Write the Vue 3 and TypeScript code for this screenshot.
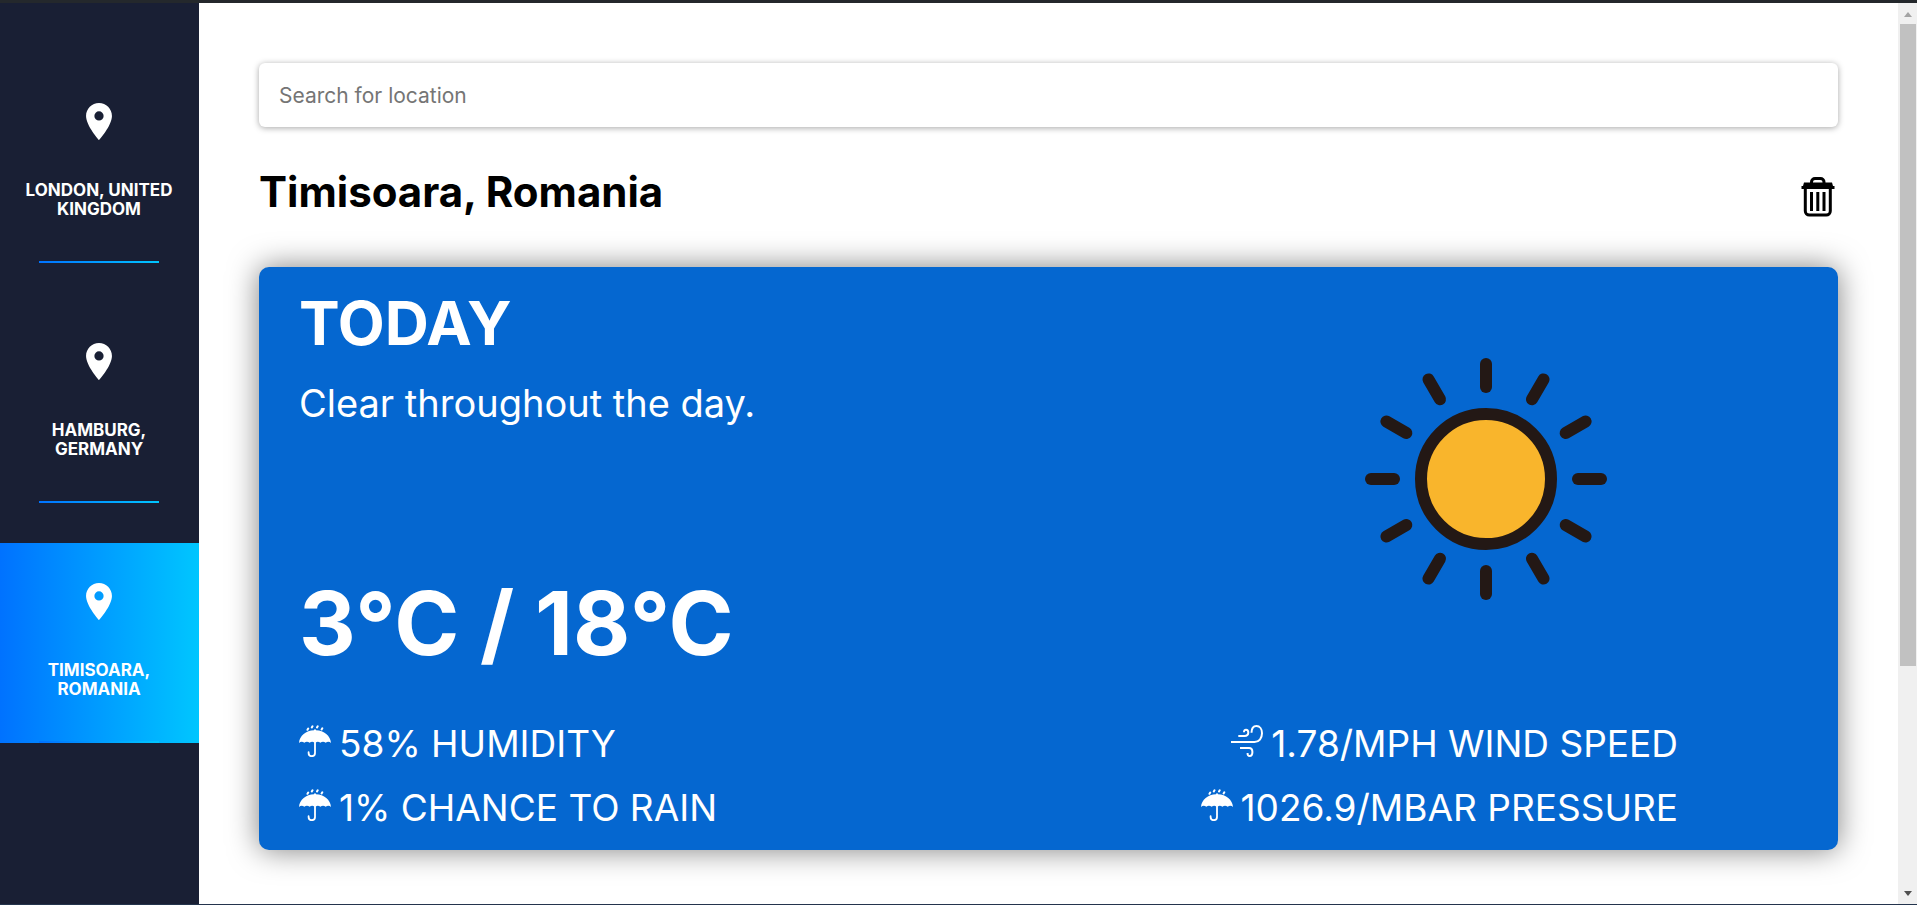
<script setup lang="ts">
import { ref } from 'vue'

interface Detail {
  icon: 'umbrella' | 'wind'
  text: string
}

const locations: string[] = ['London, United Kingdom', 'Hamburg, Germany', 'Timisoara, Romania']
const selected = ref(2)
const query = ref('')

const details: Detail[] = [
  { icon: 'umbrella', text: '58% HUMIDITY' },
  { icon: 'wind', text: '1.78/MPH WIND SPEED' },
  { icon: 'umbrella', text: '1% CHANCE TO RAIN' },
  { icon: 'umbrella', text: '1026.9/MBAR PRESSURE' },
]

const rayAngles: number[] = Array.from({ length: 12 }, (_, i) => i * 30)
</script>

<template>
  <div class="window">
    <div class="top-edge"></div>
    <div class="app">
      <nav class="sidebar" aria-label="Locations">
        <button
          v-for="(name, i) in locations"
          :key="name"
          type="button"
          class="location"
          :class="{ active: i === selected }"
          @click="selected = i"
        >
          <svg class="pin" viewBox="5 2 14 20" aria-hidden="true">
            <path
              fill="currentColor"
              fill-rule="evenodd"
              d="M12 2C8.13 2 5 5.13 5 9c0 5.25 7 13 7 13s7-7.75 7-13c0-3.87-3.13-7-7-7zm0 9.5a2.5 2.5 0 1 1 0-5 2.5 2.5 0 0 1 0 5z"
            />
          </svg>
          <span class="location-name">{{ name }}</span>
        </button>
      </nav>

      <main class="content">
        <input v-model="query" class="search" type="text" placeholder="Search for location" aria-label="Search for location" />

        <header class="heading">
          <h1 class="title">{{ locations[selected] }}</h1>
          <button type="button" class="remove" aria-label="Remove location">
            <svg viewBox="0 0 40 40" aria-hidden="true">
              <path d="M13.5 7V5a3.5 3.5 0 0 1 3.500-3.500h5.500a3.500 3.500 0 0 1 3.500 3.500v2" fill="none" stroke="#000" stroke-width="3" />
              <path d="M6 5.500h28l1 3.500h1.500v3h-33V9H5z" fill="#000" />
              <path d="M7.300 11v23a4 4 0 0 0 4 4h17a4 4 0 0 0 4-4V11" fill="none" stroke="#000" stroke-width="3" />
              <path d="M13.500 15v19M19.800 15v19M26 15v19" stroke="#000" stroke-width="3" />
            </svg>
          </button>
        </header>

        <section class="card">
          <div class="summary">
            <div class="forecast">
              <h2 class="day">TODAY</h2>
              <p class="description">Clear throughout the day.</p>
              <p class="temperature">3°C / 18°C</p>
            </div>
            <svg class="sun" viewBox="-192 -192 384 384" role="img" aria-label="Sunny">
              <circle r="65" fill="#f9b52c" stroke="#231815" stroke-width="12" />
              <line
                v-for="angle in rayAngles"
                :key="angle"
                y1="-115"
                y2="-92"
                stroke="#231815"
                stroke-width="12"
                stroke-linecap="round"
                :transform="`rotate(${angle})`"
              />
            </svg>
          </div>
          <ul class="details">
            <li v-for="detail in details" :key="detail.text" class="detail">
              <svg v-if="detail.icon === 'umbrella'" class="detail-icon" viewBox="0 0 32 32" aria-hidden="true">
                <path
                  d="M0 18C.5 10.500 7 5.500 15 5.200V4.500h2v.7c8 .3 14.500 5.300 15 12.800-1.500-1.500-3.500-1.700-5.300-.2-1.800-1.300-3.600-1.300-5.300 0-1.700-1.300-3.300-1.300-4.600-.3h-1.600c-1.300-1-2.900-1-4.600.3-1.700-1.300-3.500-1.300-5.300 0C3.500 16.300 1.500 16.500 0 18z"
                  fill="currentColor"
                />
                <path d="M16 16v12a3.200 3.200 0 0 1-6.400 0v-.8" fill="none" stroke="currentColor" stroke-width="1.800" stroke-linecap="round" />
                <path d="M9.200 3.600l-.7 1.200M13.500 1.300l-.7 1.200M18.700 1.300L18 2.500M23.300 3.300l-.7 1.200" stroke="currentColor" stroke-width="2" stroke-linecap="round" />
              </svg>
              <svg v-else class="detail-icon" viewBox="0 0 32 32" aria-hidden="true">
                <g fill="none" stroke="currentColor" stroke-width="2">
                  <path d="M0 17h23.500c4.500 0 7.500-3.700 7.500-8.700C31 4 28.700 1 25.500 1 22.300 1 20.500 3.500 20.500 7.800" />
                  <path d="M7.300 11h6.200c2.500 0 3.800-1.300 3.800-3.400 0-1.800-.9-2.900-2.300-2.900-1.300 0-2.100.9-2 2.600" />
                  <path d="M9 23h9c2.300 0 3.400 1.500 3.400 4 0 2.400-1 4-2.700 4-1.500 0-2.300-1.100-2.100-3" />
                </g>
              </svg>
              <span>{{ detail.text }}</span>
            </li>
          </ul>
        </section>
      </main>

      <div class="scrollbar" aria-hidden="true">
        <span class="arrow up"></span>
        <span class="thumb"></span>
        <span class="rest"></span>
        <span class="arrow down"></span>
      </div>
    </div>
    <div class="bottom-edge"></div>
  </div>
</template>

<style>
body {
  margin: 0;
}
</style>

<style scoped>
.window {
  display: flex;
  flex-direction: column;
  min-height: 100vh;
  font-family: Inter, 'Open Sans', sans-serif;
  color: #000;
  background: #fff;
}

.window *,
.window {
  box-sizing: border-box;
}

.top-edge {
  height: 3px;
  background: #24282c;
}

.bottom-edge {
  height: 1px;
  background: #24344d;
}

.app {
  display: flex;
  flex: 1;
}

.sidebar {
  display: flex;
  flex-direction: column;
  flex: none;
  gap: 40px;
  width: 199px;
  padding-top: 60px;
  background: #191f34;
}

.location {
  display: flex;
  flex-direction: column;
  align-items: center;
  gap: 41px;
  min-height: 200px;
  padding: 40px 21px 40px 20px;
  border: 0;
  color: #fff;
  font-family: inherit;
  font-size: 17px;
  font-weight: 700;
  line-height: 19px;
  text-align: center;
  text-transform: uppercase;
  background: linear-gradient(90deg, #0072ff, #00c6ff) left 39px bottom / 120px 2px no-repeat;
  cursor: pointer;
}

.location.active {
  background:
    linear-gradient(90deg, #0072ff, #00c6ff) left 39px bottom / 120px 2px no-repeat,
    linear-gradient(90deg, #0072ff, #00c6ff);
}

.pin {
  width: 26px;
  height: 37px;
}

.content {
  flex: 1;
  min-width: 0;
  padding: 60px 60px 54px;
}

.search {
  display: block;
  width: 100%;
  height: 64px;
  padding: 0 20px;
  border: 0;
  border-radius: 6px;
  outline: 0;
  font-family: inherit;
  font-size: 21px;
  color: #000;
  background: #fff;
  box-shadow: 0 1px 6px rgba(0, 0, 0, 0.35);
}

.search::placeholder {
  color: #757575;
  opacity: 1;
}

.heading {
  display: flex;
  align-items: center;
  justify-content: space-between;
  padding: 40px 0 50px;
}

.title {
  margin: 0;
  font-size: 42px;
  font-weight: 700;
  line-height: 50px;
}

.remove {
  width: 40px;
  height: 40px;
  margin-top: 10px;
  padding: 0;
  border: 0;
  background: none;
  cursor: pointer;
}

.remove svg {
  display: block;
}

.card {
  padding: 20px 160px 20px 40px;
  border-radius: 10px;
  color: #fff;
  background: #0567d0;
  box-shadow: 0 0 30px rgba(0, 0, 0, 0.5);
}

.summary {
  display: flex;
  justify-content: space-between;
}

.forecast {
  display: flex;
  flex-direction: column;
}

.day {
  margin: 0 0 22px;
  font-size: 61px;
  font-weight: 700;
  line-height: 72px;
}

.description {
  margin: 0;
  font-size: 38px;
  line-height: 44px;
}

.temperature {
  margin: auto 0 0;
  font-size: 88px;
  font-weight: 700;
  line-height: 96px;
}

.sun {
  width: 384px;
  height: 384px;
}

.details {
  display: grid;
  grid-template-columns: auto auto;
  justify-content: space-between;
  row-gap: 20px;
  margin: 51px 0 0;
  padding: 0;
  list-style: none;
}

.detail {
  display: flex;
  align-items: center;
  gap: 8px;
  font-size: 37px;
  line-height: 44px;
}

.detail:nth-child(even) {
  justify-content: flex-end;
}

.detail-icon {
  width: 32px;
  height: 32px;
  margin-bottom: 6px;
}

.scrollbar {
  display: flex;
  flex-direction: column;
  align-items: center;
  flex: none;
  width: 19px;
  padding: 9px 0 8px;
  background: #f0f0f0;
}

.arrow {
  border: 4px solid transparent;
}

.up {
  border-top: 0;
  border-bottom: 5px solid #a3a3a3;
}

.down {
  border-top: 5px solid #505050;
  border-bottom: 0;
}

.thumb {
  flex: 642;
  width: 16px;
  margin-top: 7px;
  background: #c1c1c1;
}

.rest {
  flex: 225;
}
</style>
